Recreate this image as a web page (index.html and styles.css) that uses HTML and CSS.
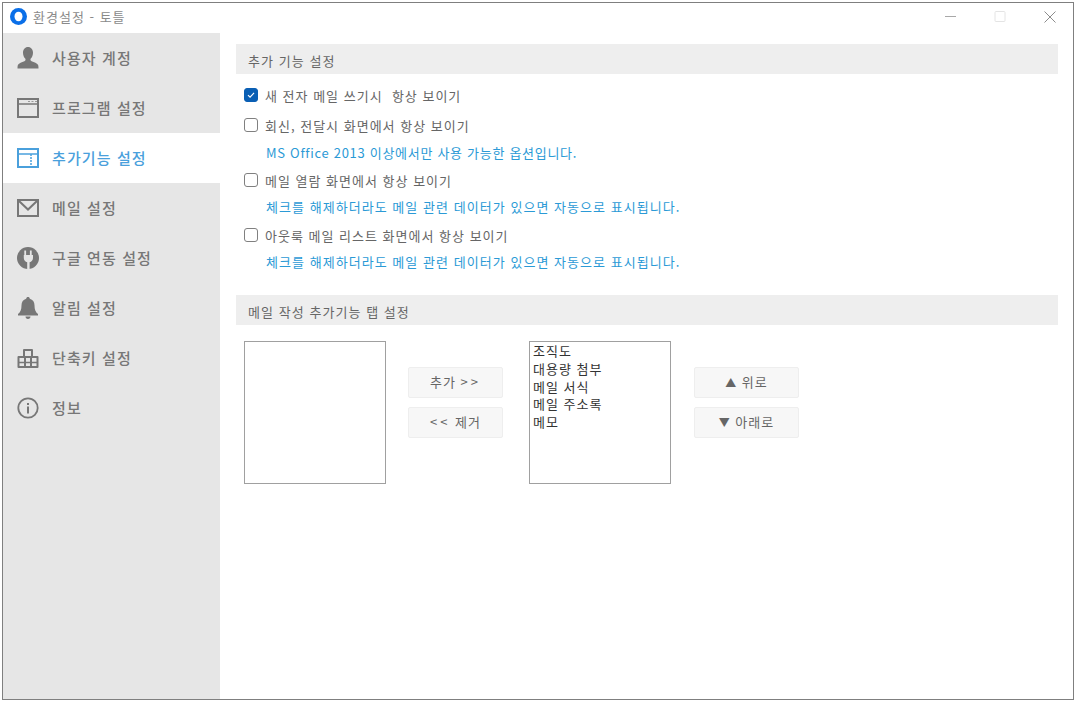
FILE: index.html
```html
<!DOCTYPE html>
<html lang="ko">
<head>
<meta charset="utf-8">
<title>환경설정 - 토틀</title>
<link rel="stylesheet" href="styles.css">
</head>
<body>
<div class="window">
  <header class="titlebar">
    <svg class="logo" viewBox="0 0 17 17"><circle cx="8.500" cy="8.500" r="8.500" fill="#0a6fe8"/><ellipse cx="8.500" cy="8.500" rx="4" ry="4.800" fill="#fff"/></svg>
    <span class="title">환경설정 - 토틀</span>
    <div class="controls">
      <svg class="ctl" viewBox="0 0 12 12"><path d="M1 5.500h11" stroke="#a8a8a8" fill="none"/></svg>
      <svg class="ctl" viewBox="0 0 12 12"><rect x="1" y=".5" width="10" height="10" rx="1" stroke="#e4e4e4" fill="none"/></svg>
      <svg class="ctl" viewBox="0 0 12 12"><path d="M.5.500l11 11M11.500.5l-11 11" stroke="#8c8c8c" fill="none"/></svg>
    </div>
  </header>
  <div class="body">
    <nav class="sidebar">
      <div class="item">
        <svg class="icon" viewBox="0 0 22 22"><path fill="#777" d="M11 0c3 0 5 2.500 5 5.800 0 2.600-1 4.700-2.400 6-.4 1.100 0 2 1 2.500 2.600 1 5.400 1.800 6.400 3.500.4.800.5 2.200.5 3.700H.5c0-1.500.1-2.900.5-3.700 1-1.700 3.800-2.500 6.400-3.500 1-.5 1.400-1.400 1-2.500C7 10.500 6 8.400 6 5.800 6 2.500 8 0 11 0z"/></svg>
        <span>사용자 계정</span>
      </div>
      <div class="item">
        <svg class="icon" viewBox="0 0 22 22"><rect x="1" y="2" width="20" height="18" fill="none" stroke="#777" stroke-width="2"/><path d="M1 7h20" stroke="#777" stroke-width="1.500"/><path d="M11 4.500h2M14.500 4.500h2M18 4.500h2" stroke="#999"/></svg>
        <span>프로그램 설정</span>
      </div>
      <div class="item active">
        <svg class="icon" viewBox="0 0 22 22"><rect x="1" y="2" width="20" height="18" fill="none" stroke="#4aa0dc" stroke-width="2"/><path d="M1 7h20" stroke="#4aa0dc" stroke-width="1.500"/><path d="M14 7v12" stroke="#4aa0dc" stroke-width="1.500" stroke-dasharray="2 1"/></svg>
        <span>추가기능 설정</span>
      </div>
      <div class="item">
        <svg class="icon" viewBox="0 0 22 22"><rect x="1" y="3" width="20" height="16" fill="none" stroke="#777" stroke-width="2"/><path d="M2 4l9 8.500L20 4" fill="none" stroke="#777" stroke-width="2"/></svg>
        <span>메일 설정</span>
      </div>
      <div class="item">
        <svg class="icon" viewBox="0 0 22 22"><circle cx="11" cy="11" r="11" fill="#777"/><path fill="#e6e6e6" d="M7.300 3.500h1.800V8h3.800V3.500h1.800V8h1.300v3c0 2.300-1.500 3.900-3.400 4.300V22h-2.400v-6.700C8.300 14.900 6.800 13.300 6.800 11V8h.5z"/></svg>
        <span>구글 연동 설정</span>
      </div>
      <div class="item">
        <svg class="icon" viewBox="0 0 22 22"><path fill="#777" d="M11 0c1 0 1.700.7 1.800 1.700 3 .8 4.700 3.300 4.700 6.600 0 4.500 1 6.700 3.500 8.700v1.500H1V17c2.500-2 3.500-4.200 3.500-8.700 0-3.300 1.700-5.800 4.700-6.600C9.300.7 10 0 11 0zM8.500 19.500h5c0 1.500-1 2.500-2.500 2.500s-2.500-1-2.500-2.500z"/></svg>
        <span>알림 설정</span>
      </div>
      <div class="item">
        <svg class="icon" viewBox="0 0 22 22"><path fill="none" stroke="#777" stroke-width="2" stroke-linejoin="round" d="M7 10V3h8v7M1.500 10h19v10h-19zM8 10v10M14 10v10"/><path stroke="#777" stroke-width="1.500" d="M1.500 15.500h19"/></svg>
        <span>단축키 설정</span>
      </div>
      <div class="item">
        <svg class="icon" viewBox="0 0 22 22"><circle cx="11" cy="11" r="9.700" fill="none" stroke="#777" stroke-width="1.800"/><rect x="10" y="9.500" width="2" height="7" fill="#777"/><rect x="10" y="6" width="2" height="2" fill="#777"/></svg>
        <span>정보</span>
      </div>
    </nav>
    <main class="content">
      <h2 class="section-head">추가 기능 설정</h2>
      <div class="options">
        <label class="check row-a"><span class="box checked"><svg viewBox="0 0 14 14"><path d="M3.500 7.200l2.400 2.400 4.700-5" fill="none" stroke="#fff" stroke-width="1.300"/></svg></span>새 전자 메일 쓰기시&nbsp; 항상 보이기</label>
        <label class="check row-b"><span class="box"></span>회신, 전달시 화면에서 항상 보이기</label>
        <p class="note note-a">MS Office 2013 이상에서만 사용 가능한 옵션입니다.</p>
        <label class="check row-c"><span class="box"></span>메일 열람 화면에서 항상 보이기</label>
        <p class="note note-b">체크를 해제하더라도 메일 관련 데이터가 있으면 자동으로 표시됩니다.</p>
        <label class="check row-d"><span class="box"></span>아웃룩 메일 리스트 화면에서 항상 보이기</label>
        <p class="note note-b">체크를 해제하더라도 메일 관련 데이터가 있으면 자동으로 표시됩니다.</p>
      </div>
      <h2 class="section-head second">메일 작성 추가기능 탭 설정</h2>
      <div class="tabs">
        <div class="listbox"></div>
        <div class="btns mid">
          <button class="btn">추가 <span class="arrows">&gt;&gt;</span></button>
          <button class="btn"><span class="arrows">&lt;&lt;</span> 제거</button>
        </div>
        <div class="listbox">
          <div>조직도</div>
          <div>대용량 첨부</div>
          <div>메일 서식</div>
          <div>메일 주소록</div>
          <div>메모</div>
        </div>
        <div class="btns last">
          <button class="btn"><span class="tri">▲</span> 위로</button>
          <button class="btn"><span class="tri">▼</span> 아래로</button>
        </div>
      </div>
    </main>
  </div>
</div>
</body>
</html>
```
FILE: styles.css
```css
* { box-sizing: border-box; }
html, body { margin: 0; padding: 0; background: #fff; }
body { font-family: "Noto Sans CJK KR", "Noto Sans", sans-serif; }
.window {
  width: 1072px;
  height: 698px;
  margin: 2px 0 0 2px;
  border: 1px solid #7f7f7f;
  display: flex;
  flex-direction: column;
  background: #fff;
}
.titlebar { height: 30px; display: flex; align-items: center; padding: 0 0 3px 7px; flex: none; }
.logo { width: 17px; height: 17px; margin-right: 6px; }
.title { font-size: 13px; color: #8a8a8a; letter-spacing: 1px; }
.controls { margin-left: auto; display: flex; align-items: center; gap: 38px; padding-right: 17px; }
.ctl { width: 12px; height: 12px; display: block; }
.body { flex: 1; display: flex; min-height: 0; }
.sidebar { width: 217px; background: #e6e6e6; flex: none; }
.item { height: 50px; display: flex; align-items: center; padding-left: 14px; font-size: 15px; font-weight: 500; color: #777; letter-spacing: 1.100px; }
.item span { padding-bottom: 2px; }
.item .icon { width: 22px; height: 22px; margin-right: 13px; flex: none; }
.item.active { background: #fff; color: #4aa0dc; }
.content { flex: 1; padding: 11px 15px 0 16px; }
.section-head { margin: 0; height: 30px; background: #eee; font-size: 13px; font-weight: 400; color: #666; padding-left: 12px; line-height: 33px; letter-spacing: 1.050px; }
.section-head.second { margin-top: 23px; }
.options { display: flex; flex-direction: column; }
.check { display: flex; align-items: center; font-size: 13px; color: #666; padding-left: 8px; height: 20px; letter-spacing: 1px; }
.row-a { margin-top: 11px; }
.row-b { margin-top: 10px; }
.row-c { margin-top: 7px; }
.row-d { margin-top: 8px; }
.box { width: 14px; height: 14px; border: 1px solid #808080; border-radius: 3px; margin-right: 7px; flex: none; background: #fff; display: block; }
.box.checked { background: #0a5fb4; border-color: #0a5fb4; }
.box svg { display: block; width: 12px; height: 12px; }
.note { margin: 0; font-size: 13px; color: #2b9ad6; padding-left: 30px; height: 20px; line-height: 20px; letter-spacing: 1.040px; }
.note-a { margin-top: 8px; letter-spacing: .7px; }
.note-b { margin-top: 7px; }
.tabs { display: flex; margin-top: 16px; padding-left: 8px; align-items: flex-start; }
.listbox { width: 142px; height: 143px; border: 1px solid #a0a0a0; padding: 0 3px; font-size: 13px; line-height: 17.800px; color: #333; letter-spacing: 1px; flex: none; }
.btns { display: flex; flex-direction: column; gap: 9px; padding-top: 26px; flex: none; }
.mid { margin: 0 26px 0 22px; width: 95px; }
.last { margin-left: 23px; width: 105px; }
.btn { height: 31px; border: 1px solid #eee; border-radius: 2px; background: #f7f7f7; font: inherit; font-size: 13px; color: #666; letter-spacing: 1px; padding: 0 0 2px; }
.tri { font-size: 11px; }
.arrows { letter-spacing: 3px; }
```
